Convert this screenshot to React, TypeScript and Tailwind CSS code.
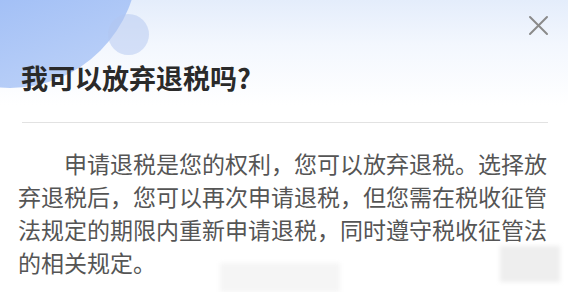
import React from "react";

export default function App() {
  return (
    <div
      className="relative w-[568px] h-[292px] overflow-hidden bg-[linear-gradient(to_bottom,#e4edfb_0px,#f3f7fe_45px,#ffffff_105px)]"
      style={{ fontFamily: '"Noto Sans CJK SC", "Noto Sans", sans-serif' }}
    >
      {/* decorative circles */}
      <div className="absolute left-[-118px] top-[-168px] w-[256px] h-[256px] rounded-full bg-[linear-gradient(160deg,#86aaf2_20%,#a3c0f6_60%,#c0d4f8_100%)]" />
      <div className="absolute left-[108px] top-[14px] w-[41px] h-[41px] rounded-full bg-[rgba(178,198,240,0.5)]" />

      {/* faint mosaic watermark blocks */}
      <div className="absolute left-[220px] top-[263px] w-[120px] h-[29px] bg-[#f5f5f5] blur-[2px]" />
      <div className="absolute left-[500px] top-[246px] w-[60px] h-[36px] bg-[#eeeeee] blur-[2px]" />

      <div className="relative flex flex-col">
        <div className="flex justify-end pt-[15px] pr-[19px]">
          <button className="w-[21px] h-[21px]">
            <svg viewBox="0 0 21 21" className="w-full h-full" fill="none" stroke="#8a8a8a" strokeWidth="2" strokeLinecap="round">
              <path d="M2 2 L19 19 M19 2 L2 19" />
            </svg>
          </button>
        </div>
        <h1 className="mt-[24px] pl-[21px] text-[27px] leading-[36px] font-bold text-[#2a2a2a]">我可以放弃退税吗?</h1>
        <div className="ml-[22px] mr-[20px] mt-[26px] h-px bg-[#e2e2e2]" />
        <p className="ml-[18px] mt-[24px] w-[534px] text-[23px] leading-[33px] text-[#555555] indent-[2em]">
          申请退税是您的权利，您可以放弃退税。选择放弃退税后，您可以再次申请退税，但您需在税收征管法规定的期限内重新申请退税，同时遵守税收征管法的相关规定。
        </p>
      </div>
    </div>
  );
}
